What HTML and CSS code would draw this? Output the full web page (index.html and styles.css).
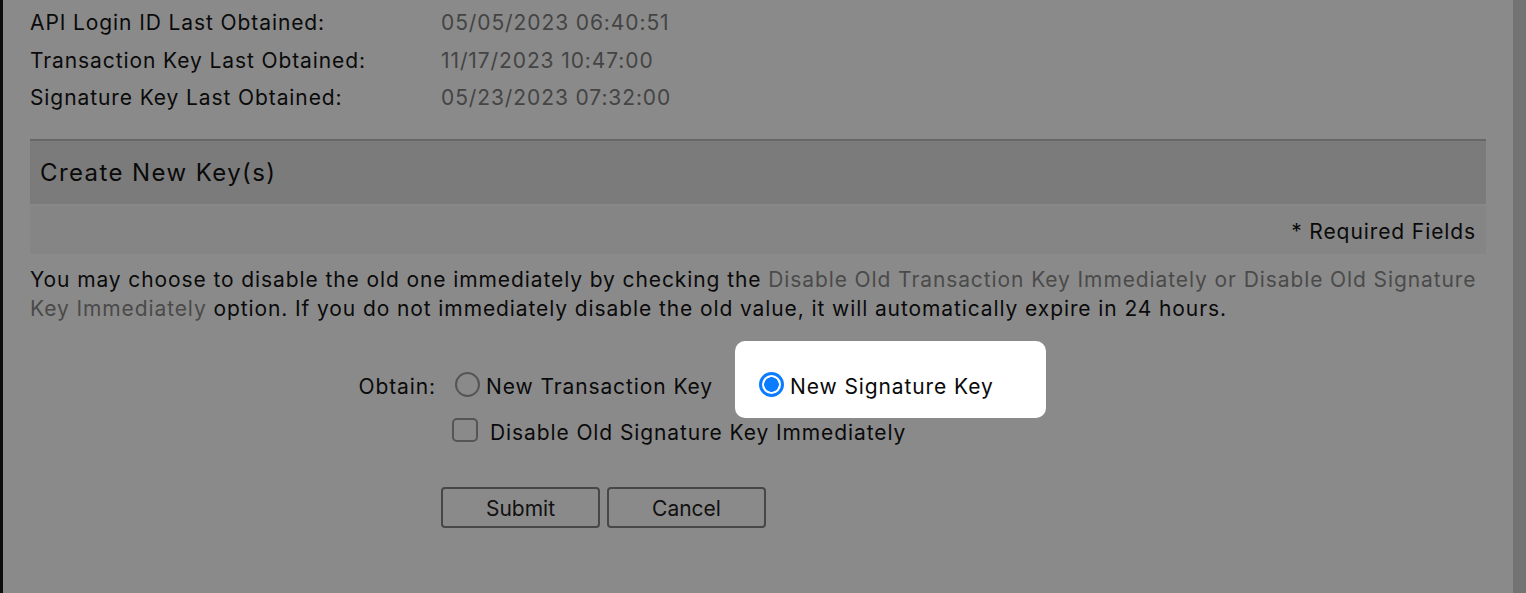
FILE: index.html
```html
<!DOCTYPE html>
<html>
<head>
<meta charset="utf-8">
<link rel="stylesheet" href="styles.css">
</head>
<body>
<div class="edge-left"></div>
<main class="page">
  <div class="info">
    <div class="info-label">API Login ID Last Obtained:</div>
    <div class="info-value">05/05/2023 06:40:51</div>
    <div class="info-label">Transaction Key Last Obtained:</div>
    <div class="info-value">11/17/2023 10:47:00</div>
    <div class="info-label">Signature Key Last Obtained:</div>
    <div class="info-value">05/23/2023 07:32:00</div>
  </div>
  <div class="rule"></div>
  <div class="section-head">Create New Key(s)</div>
  <div class="required">* Required Fields</div>
  <p class="note">You may choose to disable the old one immediately by checking the <span class="ref">Disable Old Transaction Key Immediately or Disable Old Signature Key Immediately</span> option. If you do not immediately disable the old value, it will automatically expire in 24 hours.</p>
  <div class="obtain">
    <div class="obtain-label">Obtain:</div>
    <div class="obtain-options">
      <div class="option-row">
        <label class="opt"><input type="radio" name="k" class="radio"><span>New Transaction Key</span></label>
        <label class="opt spot"><input type="radio" name="k" class="radio" checked><span>New Signature Key</span></label>
      </div>
      <label class="opt check-row"><input type="checkbox" class="check"><span>Disable Old Signature Key Immediately</span></label>
    </div>
  </div>
  <div class="actions">
    <button class="btn">Submit</button>
    <button class="btn">Cancel</button>
  </div>
</main>
<div class="edge-right"></div>
</body>
</html>
```
FILE: styles.css
```css
html, body {
  margin: 0;
  height: 100%;
}
body {
  display: flex;
  background: #8a8a8a;
  font-family: Inter, "Noto Sans", sans-serif;
  font-size: 21px;
  letter-spacing: 0.9px;
  color: #0a0a0a;
  overflow: hidden;
}
.edge-left {
  width: 3px;
  background: #0d0d0d;
  flex: none;
}
.edge-right {
  width: 13px;
  background: #737373;
  flex: none;
}
.page {
  flex: 1;
  padding: 4px 27px 0 27px;
}
.info {
  display: grid;
  grid-template-columns: 411px auto;
  line-height: 37.5px;
}
.info-value {
  color: #444;
}
.rule {
  margin-top: 22px;
  height: 2px;
  background: #676767;
}
.section-head {
  height: 65px;
  background: #7b7b7b;
  padding-left: 10px;
  display: flex;
  align-items: center;
  box-sizing: border-box;
  font-size: 24px;
  letter-spacing: 1.4px;
  border-bottom: 2px solid #888;
}
.required {
  height: 48px;
  background: #858585;
  display: flex;
  align-items: center;
  justify-content: flex-end;
  padding-right: 10px;
  padding-top: 4px;
  box-sizing: border-box;
}
.note {
  margin: 11px 0 0;
  line-height: 29px;
}
.ref {
  color: #4a4a4a;
}
.obtain {
  display: flex;
  margin-top: 42px;
  gap: 16px;
}
.obtain-label {
  width: 406px;
  text-align: right;
  line-height: 44px;
}
.obtain-options {
  display: flex;
  flex-direction: column;
}
.option-row {
  display: flex;
  gap: 43px;
  height: 44px;
  align-items: center;
}
.opt {
  display: flex;
  align-items: center;
  position: relative;
  height: 30px;
}
.radio {
  appearance: none;
  margin: 0 6px 5px 3px;
  width: 25px;
  height: 25px;
  border: 2px solid #555;
  border-radius: 50%;
  background: transparent;
  flex: none;
}
.radio:checked {
  border: 3px solid #0a7cff;
  background: radial-gradient(circle, #0a7cff 0 7px, #fff 7.5px);
}
.spot {
  z-index: 1;
}
.spot::before {
  content: "";
  position: absolute;
  left: -21px;
  right: -52px;
  top: -31px;
  bottom: -16px;
  background: #fff;
  border-radius: 10px;
  z-index: -1;
}
.check-row {
  height: 47px;
}
.check {
  appearance: none;
  margin: 0 12px 4px 0;
  width: 26px;
  height: 24px;
  border: 2px solid #555;
  border-radius: 5px;
  flex: none;
}
.actions {
  display: flex;
  gap: 7px;
  margin-top: 31px;
  padding-left: 411px;
}
.btn {
  width: 159px;
  height: 41px;
  font: inherit;
  color: #111;
  background: transparent;
  border: 2px solid #474747;
  border-radius: 4px;
  padding: 2px 0 0;
}
```
